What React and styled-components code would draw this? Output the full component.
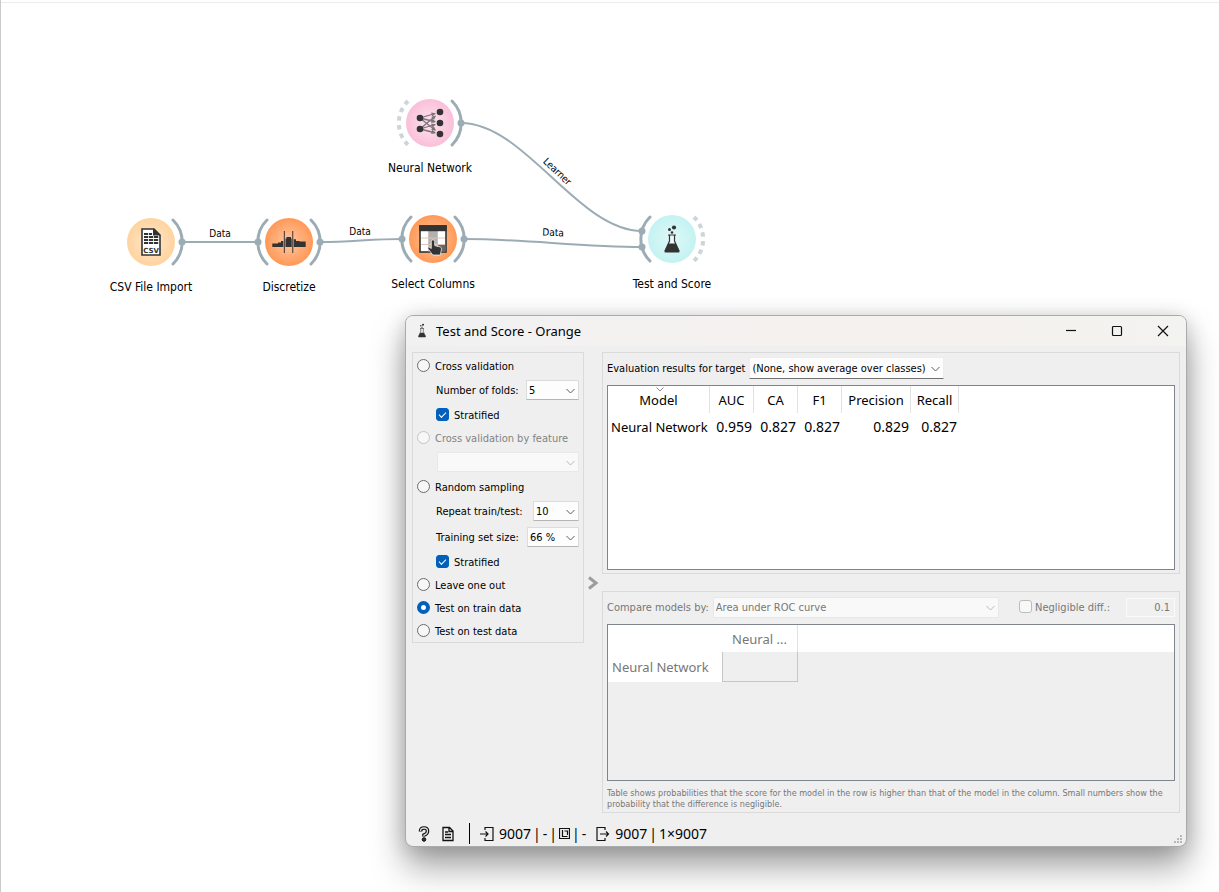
import React from "react";
import styled, { createGlobalStyle, css } from "styled-components";

const ui = `"DejaVu Sans Condensed", "DejaVu Sans", sans-serif`;
const segoe = `"Noto Sans", "Open Sans", sans-serif`;
const ink = "#333333";
const wire = "#9cacb5";

const GlobalStyle = createGlobalStyle`
  *, *::before, *::after { box-sizing: border-box; }
  body { margin: 0; background: #fff; color: #000; font-family: ${ui}; }
`;

/* ---------- canvas ---------- */

const Canvas = styled.main`
  position: relative;
  min-height: 100vh;
  overflow: hidden;
  background: #fff;
  border-left: 1px solid #c9cbcd;

  &::before {
    content: "";
    display: block;
    height: 3px;
    border-bottom: 1px solid #ececec;
  }
`;

const Links = styled.svg`
  position: absolute;
  left: -1px;
  top: 0;
  width: 760px;
  height: 310px;
  fill: none;
  stroke: ${wire};
  stroke-width: 2;

  text {
    fill: #000;
    stroke: none;
    font: 10px ${ui};
    text-anchor: middle;
  }
`;

const Node = styled.figure`
  position: absolute;
  left: ${(p) => p.$x - 1}px;
  top: ${(p) => p.$y}px;
  width: 120px;
  margin: -36px 0 0 -60px;
  display: flex;
  flex-direction: column;
  align-items: center;

  svg { width: 80px; height: 72px; }

  figcaption {
    font-size: 12px;
    line-height: 18px;
    white-space: nowrap;
  }
`;

const ARC_RIGHT = "M22 -22A31 31 0 0 1 22 22";
const ARC_LEFT = "M-22 -22A31 31 0 0 0 -22 22";

function Arc({ d, open }) {
  return (
    <path
      d={d}
      fill="none"
      stroke={open ? "#cdd5da" : wire}
      strokeWidth={open ? 4 : 3}
      strokeLinecap={open ? "butt" : "round"}
      strokeDasharray={open ? "4.5 4.3" : undefined}
    />
  );
}

function Widget({ x, y, name, tone, left, right, children }) {
  const id = "g-" + name.replace(/ /g, "-");
  return (
    <Node $x={x} $y={y}>
      <svg viewBox="-40 -36 80 72" aria-hidden="true">
        <defs>
          <radialGradient id={id}>
            <stop offset="0" stopColor={tone[0]} />
            <stop offset="1" stopColor={tone[1]} />
          </radialGradient>
        </defs>
        {left && <Arc d={ARC_LEFT} open={left === "open"} />}
        {right && <Arc d={ARC_RIGHT} open={right === "open"} />}
        {Array.isArray(left) &&
          left.map((dy) => <circle key={dy} cx={dy ? -30 : -31} cy={dy} r="3.5" fill={wire} />)}
        {Array.isArray(right) &&
          right.map((dy) => <circle key={dy} cx="31" cy={dy} r="3.5" fill={wire} />)}
        <circle r="24" fill={`url(#${id})`} />
        {children}
      </svg>
      <figcaption>{name}</figcaption>
    </Node>
  );
}

function NetworkIcon() {
  const ins = [-5, 6];
  const outs = [-11, 0, 11];
  return (
    <g>
      <g stroke="#7d7478" strokeWidth="1.3">
        {ins.map((a) =>
          outs.map((b) => {
            const k = (b - a) / 20;
            const ex = 6;
            const ey = b - k * 4;
            const n = Math.atan2(b - a, 20);
            const p = (s) =>
              `${ex - 5 * Math.cos(n + s)} ${ey - 5 * Math.sin(n + s)}`;
            return (
              <g key={`${a}${b}`}>
                <line x1="-10" y1={a} x2={ex - 1} y2={ey - k} />
                <path d={`M${ex} ${ey}L${p(0.45)}L${p(-0.45)}Z`} fill="#7d7478" stroke="none" />
              </g>
            );
          })
        )}
      </g>
      <g fill={ink}>
        {ins.map((a) => <circle key={a} cx="-10" cy={a} r="3.3" />)}
        {outs.map((b) => <circle key={b} cx="10" cy={b} r="3.3" />)}
      </g>
    </g>
  );
}

function CsvIcon() {
  return (
    <g>
      <path d="M-9 -13H3L9 -7V13H-9Z" fill="#fff" stroke={ink} strokeWidth="1.6" />
      <path d="M2 -13.5L9.5 -6.5H2Z" fill={ink} />
      <g fill={ink}>
        {[-6, -3, 0].map((y) =>
          [-7, -2, 3].map((x) => <rect key={`${x}${y}`} x={x} y={y} width="4.2" height="2" />)
        )}
        <rect x="-7" y="-9" width="4.2" height="2" />
        <rect x="-2" y="-9" width="3" height="2" />
        <text y="10.5" textAnchor="middle" fontSize="7" fontWeight="bold" fontFamily="DejaVu Sans">
          CSV
        </text>
      </g>
    </g>
  );
}

function DiscretizeIcon() {
  return (
    <g fill={ink}>
      <path d="M-16.7 1.500H-11V0.500H-8V-1H-5.700V5H-16.700Z" />
      <path d="M-3.500 -3.500H-2.500V-5H2V-3.500H2.700V5H-3.500Z" />
      <path d="M4.700 -2.700H7V-1H10.500V-0.500H16.700V5H4.700Z" />
      <path d="M-4.600 -11V11M3.700 -11V11" stroke="#5b4a42" strokeWidth="1.200" />
    </g>
  );
}

function ColumnsIcon() {
  return (
    <g>
      <rect x="-13" y="-13" width="26" height="26" fill="#fff" stroke={ink} strokeWidth="1.600" />
      <rect x="-4.500" y="-8" width="9" height="20" fill="#b3b0af" />
      <rect x="5" y="6" width="7.500" height="6.500" fill="#666" />
      <path d="M-12 -1H12M-12 5.500H12" stroke="#e0c5b9" strokeWidth="1" />
      <path d="M-4.500 -8V12.500M4.500 -8V12.500" stroke="#c5b5ae" strokeWidth="0.700" />
      <rect x="-13.800" y="-13.800" width="27.600" height="6" fill={ink} />
      <path
        d="M-1.700 2.500a1.700 1.700 0 0 1 3.400 0v4l1 .4 4.500 1q1.500.5 1.300 2.200l-1.200 5.900h-7.500l-4.800-6.300q-.6-1.500.8-1.800l2.500 1.600z"
        fill={ink}
        stroke="#fff"
        strokeWidth="0.700"
      />
    </g>
  );
}

function FlaskShape() {
  return (
    <g>
      <path d="M-2.500 -4V2L-7 12H7L2.500 2V-4" fill="#eefafa" />
      <path d="M-4 -4H4M-2.500 -4V2L-7 12M2.500 -4V2L7 12" stroke={ink} strokeWidth="1.200" fill="none" />
      <path d="M-3.500 4.500H3.500L7.500 12Q7.800 13.500 6.500 13.500H-6.500Q-7.800 13.500 -7.500 12Z" fill={ink} />
      <g fill={ink}>
        <circle cx="2" cy="-11.500" r="2.100" />
        <circle cx="-2.500" cy="-9.500" r="1.500" />
        <circle cx="0" cy="-6.500" r="1.300" />
      </g>
    </g>
  );
}

/* ---------- window ---------- */

const Window = styled.section`
  position: absolute;
  left: 404px;
  right: 32px;
  top: 315px;
  min-width: 640px;
  display: flex;
  flex-direction: column;
  background: #efefef;
  border: 1px solid #a9aaaa;
  border-radius: 8px;
  box-shadow: 0 20px 34px rgba(0, 0, 0, 0.36), 0 2px 20px rgba(0, 0, 0, 0.16);
`;

const TitleBar = styled.header`
  display: flex;
  align-items: center;
  height: 30px;
  padding-left: 10px;
  border-radius: 7px 7px 0 0;
  background: linear-gradient(90deg, #f2f1f2, #f5f1ef 60%, #f3f3f0);
  font-family: ${segoe};

  > svg { width: 12px; height: 16px; }

  h1 {
    flex: 1;
    margin: 0 0 0 8px;
    font-size: 13px;
    line-height: 18px;
    font-weight: 400;
  }
`;

const CaptionButton = styled.button`
  width: 46px;
  height: 28px;
  padding: 0;
  border: 0;
  background: none;
  display: grid;
  place-items: center;

  svg { width: 12px; height: 12px; fill: none; stroke: #111; stroke-width: 1.200; }
`;

const Body = styled.div`
  display: grid;
  grid-template-columns: 172px 18px minmax(0, 1fr);
  padding: 6px 6px 0;
`;

const Group = styled.section`
  border: 1px solid #dadada;
  font-size: 11px;
  line-height: 14px;
  color: ${(p) => (p.$muted ? "#777" : "#000")};
`;

const Options = styled(Group)`
  align-self: start;
  padding: 1px 4px 0;
`;

const Row = styled.div`
  display: flex;
  align-items: center;
  height: ${(p) => (p.$tall ? 26 : 23)}px;
  padding-left: ${(p) => (p.$indent ? 19 : 0)}px;
  color: ${(p) => (p.$off ? "#838383" : "inherit")};
`;

const Caption = styled.label`
  padding-top: 2px;
`;

const Choice = styled.label`
  display: flex;
  align-items: flex-start;
  gap: ${(p) => (p.$apart ? 3 : 5)}px;
  margin-left: ${(p) => (p.$apart ? 16 : 0)}px;
  padding-top: ${(p) => (p.$apart ? 0 : 2)}px;
  line-height: 15px;
  white-space: nowrap;
`;

const Radio = styled.input.attrs({ type: "radio", name: "method" })`
  appearance: none;
  width: 13px;
  height: 13px;
  margin: 0;
  border: 1px solid #6c6c6c;
  border-radius: 50%;
  background: #f7f7f7;

  &:checked { border: 4px solid #0060ba; background: #fff; }
  &:disabled { border-color: #c4c4c4; }
`;

const Check = styled.input.attrs({ type: "checkbox" })`
  appearance: none;
  width: 13px;
  height: 13px;
  margin: 0;
  border: 1px solid #bcbcbc;
  border-radius: 3px;
  background: #f8f8f8;
  display: grid;
  place-items: center;

  &:checked { border-color: #0060ba; background: #0060ba; }
  &:checked::after {
    content: "";
    width: 7px;
    height: 4px;
    margin-top: -2px;
    border: solid #fff;
    border-width: 0 0 1px 1px;
    transform: rotate(-45deg);
  }
`;

const Picker = styled.span`
  position: relative;
  display: flex;
  flex: ${(p) => (p.$grow ? 1 : "none")};
  width: ${(p) => (p.$w ? p.$w + "px" : "auto")};
  margin-left: ${(p) => (p.$end ? "auto" : 0)};

  svg {
    position: absolute;
    right: 4px;
    top: 50%;
    width: 9px;
    height: 6px;
    margin-top: -2px;
    fill: none;
    stroke: ${(p) => (p.$off ? "#b9b9b9" : "#5c5c5c")};
    pointer-events: none;
  }
`;

const Select = styled.select`
  appearance: none;
  width: 100%;
  height: ${(p) => p.$h || 20}px;
  padding: 1px 14px 0 2px;
  border: 1px solid #dcdcdc;
  border-bottom-color: #b5b5b5;
  border-radius: 1px;
  background: #fdfdfd;
  font: 11px ${ui};
  color: #000;

  ${(p) => p.$strong && css`border-color: #ececec; border-bottom-color: #6f6f6f;`}
  &:disabled {
    opacity: 1;
    border-color: #e8e8e8;
    background: #f9f9f9;
    color: #777;
  }
`;

function Combo({ id, value, label, h, strong, disabled, ...rest }) {
  return (
    <Picker $off={disabled} {...rest}>
      <Select
        id={id}
        aria-label={label}
        disabled={disabled}
        $h={h}
        $strong={strong}
        defaultValue={value}
      >
        <option>{value}</option>
      </Select>
      <svg viewBox="0 0 9 6" aria-hidden="true"><path d="M.5 1L4.500 5L8.500 1" /></svg>
    </Picker>
  );
}

const Splitter = styled.button`
  padding: 0;
  border: 0;
  background: none;
  display: grid;
  place-items: center;

  svg { width: 12px; height: 14px; fill: none; stroke: #9c9c9c; stroke-width: 3; }
`;

const Results = styled.div`
  display: grid;
  gap: 17px;
`;

const ResultGroup = styled(Group)`
  display: flex;
  flex-direction: column;
  min-height: 222px;
  padding: 4px 4px 2px;
`;

const Bar = styled.div`
  display: flex;
  align-items: center;
  gap: 4px;
  height: 22px;
  margin-bottom: 6px;
  white-space: nowrap;
`;

const Frame = styled.div`
  height: ${(p) => p.$h}px;
  border: 1px solid #7f848f;
  background: ${(p) => (p.$grey ? "#efefef" : "#fff")};
`;

const Table = styled.table`
  border-collapse: separate;
  border-spacing: 0;
  table-layout: fixed;
  width: ${(p) => (p.$full ? "100%" : "351px")};
  font-family: ${segoe};
  font-size: 13px;
  line-height: 18px;

  th, td { padding: 0; font-weight: 400; white-space: nowrap; }
`;

const Head = styled.th`
  width: ${(p) => (p.$w ? p.$w + "px" : "auto")};
  height: 27px;
  text-align: center;
  background: #fff;
  border-right: ${(p) => (p.$last ? 0 : 1)}px solid #e2e2e2;
`;

const SortHead = styled.span`
  position: relative;
  display: block;

  svg {
    position: absolute;
    left: 50%;
    top: -4px;
    width: 8px;
    height: 5px;
    margin-left: -3px;
    fill: none;
    stroke: #8a8a8a;
  }
`;

const RowHead = styled.th`
  height: ${(p) => p.$h}px;
  text-align: left;
  && { padding-left: ${(p) => p.$pad}px; }
  background: #fff;
`;

const Score = styled.td`
  text-align: right;
  font-size: 14px;
  && { padding-right: 2px; }
`;

const Cell = styled.td`
  border: 1px solid #c6c6c6;
  border-width: 0 1px 1px 1px;
`;

const Threshold = styled.input`
  width: 49px;
  height: 19px;
  margin-left: 12px;
  padding: 1px 4px 0;
  border: 1px solid #fafafa;
  background: #f0f0f0;
  color: #777;
  font: 11px ${ui};
  text-align: right;
`;

const Note = styled.p`
  margin: 7px 0 0;
  font-size: 9px;
  line-height: 11px;
`;

const StatusBar = styled.footer`
  position: relative;
  display: flex;
  align-items: center;
  height: 33px;
  padding: 8px 0 0 11px;
  font-family: ${segoe};
  font-size: 14px;
  line-height: 20px;
`;

const Tool = styled.button`
  width: 14px;
  height: 18px;
  margin-right: 10px;
  padding: 0;
  border: 0;
  background: none;

  svg { display: block; width: 14px; height: 18px; }
`;

const Rule = styled.span`
  width: 1px;
  height: 21px;
  margin: 0 10px 0 4px;
  background: #000;
`;

const Flow = styled.span`
  display: flex;
  align-items: center;
  gap: 2px;
  margin-right: 10px;
`;

const FlowIcon = styled.svg`
  width: ${(p) => (p.$mini ? 11 : 14)}px;
  height: ${(p) => (p.$mini ? 11 : 16)}px;
  margin-right: ${(p) => (p.$mini ? 0 : 3)}px;
  fill: none;
  stroke: #111;
  stroke-width: 1.200;
`;

const Grip = styled.svg`
  position: absolute;
  right: 3px;
  bottom: 2px;
  width: 9px;
  height: 9px;
  fill: #b8b8b8;
`;

const scores = [
  ["AUC", 44, "0.959"],
  ["CA", 44, "0.827"],
  ["F1", 44, "0.827"],
  ["Precision", 69, "0.829"],
  ["Recall", 48, "0.827"],
];

export default function App() {
  return (
    <>
      <GlobalStyle />
      <Canvas>
        <Links viewBox="0 0 760 310" aria-hidden="true">
          <path d="M182 242H258" />
          <path d="M320 242C352 242 370 239 402 239" />
          <path d="M464 239C525 239 580 247 642 247" />
          <path d="M461 123C525 123 578 231 642 231" />
          <text x="220" y="237">Data</text>
          <text x="360" y="235">Data</text>
          <text x="553" y="236" transform="rotate(2 553 236)">Data</text>
          <text x="555" y="174" transform="rotate(43 555 174)">Learner</text>
        </Links>

        <Widget x={430} y={123} name="Neural Network" tone={["#fde4ee", "#fabfd9"]} left="open" right={[0]}>
          <NetworkIcon />
        </Widget>
        <Widget x={151} y={242} name="CSV File Import" tone={["#ffe9cd", "#ffd39f"]} right={[0]}>
          <CsvIcon />
        </Widget>
        <Widget x={289} y={242} name="Discretize" tone={["#ffc7a2", "#ff9957"]} left={[0]} right={[0]}>
          <DiscretizeIcon />
        </Widget>
        <Widget x={433} y={239} name="Select Columns" tone={["#ffc7a2", "#ff9957"]} left={[0]} right={[0]}>
          <ColumnsIcon />
        </Widget>
        <Widget x={672} y={239} name="Test and Score" tone={["#e0f8f7", "#c3f3f2"]} left={[-8, 8]} right="open">
          <FlaskShape />
        </Widget>

        <Window>
          <TitleBar>
            <svg viewBox="-12 -15 24 32" aria-hidden="true"><FlaskShape /></svg>
            <h1>Test and Score - Orange</h1>
            <CaptionButton aria-label="Minimize">
              <svg viewBox="0 0 12 12"><path d="M1 5.500H11" /></svg>
            </CaptionButton>
            <CaptionButton aria-label="Maximize">
              <svg viewBox="0 0 12 12"><rect x="1.500" y="1.500" width="9" height="9" rx="1" /></svg>
            </CaptionButton>
            <CaptionButton aria-label="Close">
              <svg viewBox="0 0 12 12"><path d="M1 1L11 11M11 1L1 11" /></svg>
            </CaptionButton>
          </TitleBar>

          <Body>
            <Options>
              <Row><Choice><Radio />Cross validation</Choice></Row>
              <Row $tall $indent>
                <Caption htmlFor="folds">Number of folds:</Caption>
                <Combo id="folds" value="5" $w={53} $end />
              </Row>
              <Row $indent><Choice><Check defaultChecked />Stratified</Choice></Row>
              <Row $off><Choice><Radio disabled />Cross validation by feature</Choice></Row>
              <Row $tall $indent>
                <Combo label="Feature" value="" $w={142} $end disabled />
              </Row>
              <Row><Choice><Radio />Random sampling</Choice></Row>
              <Row $tall $indent>
                <Caption htmlFor="repeat">Repeat train/test:</Caption>
                <Combo id="repeat" value="10" $w={46} $end />
              </Row>
              <Row $tall $indent>
                <Caption htmlFor="size">Training set size:</Caption>
                <Combo id="size" value="66 %" $w={52} $end />
              </Row>
              <Row $indent><Choice><Check defaultChecked />Stratified</Choice></Row>
              <Row><Choice><Radio />Leave one out</Choice></Row>
              <Row><Choice><Radio defaultChecked />Test on train data</Choice></Row>
              <Row><Choice><Radio />Test on test data</Choice></Row>
            </Options>

            <Splitter aria-label="Toggle panel">
              <svg viewBox="0 0 12 14"><path d="M2 1.500L9 7L2 12.500" /></svg>
            </Splitter>

            <Results>
              <ResultGroup>
                <Bar>
                  <Caption htmlFor="target">Evaluation results for target</Caption>
                  <Combo id="target" value="(None, show average over classes)" h={22} strong $w={195} />
                </Bar>
                <Frame $h={185}>
                  <Table>
                    <thead>
                      <tr>
                        <Head $w={102}>
                          <SortHead>
                            Model
                            <svg viewBox="0 0 8 5" aria-hidden="true"><path d="M.5 .5L4 4L7.500 .5" /></svg>
                          </SortHead>
                        </Head>
                        {scores.map(([name, w]) => <Head key={name} $w={w}>{name}</Head>)}
                      </tr>
                    </thead>
                    <tbody>
                      <tr>
                        <RowHead scope="row" $h={28} $pad={3}>Neural Network</RowHead>
                        {scores.map(([name, , v]) => <Score key={name}>{v}</Score>)}
                      </tr>
                    </tbody>
                  </Table>
                </Frame>
              </ResultGroup>

              <ResultGroup $muted>
                <Bar>
                  <Caption htmlFor="compare">Compare models by:</Caption>
                  <Combo id="compare" value="Area under ROC curve" h={21} $grow disabled />
                  <Choice $apart><Check disabled />Negligible diff.:</Choice>
                  <Threshold aria-label="Negligible difference" defaultValue="0.1" disabled />
                </Bar>
                <Frame $h={157} $grey>
                  <Table $full>
                    <thead>
                      <tr>
                        <Head $w={114} $last />
                        <Head $w={76}>Neural ...</Head>
                        <Head $last />
                      </tr>
                    </thead>
                    <tbody>
                      <tr>
                        <RowHead scope="row" $h={30} $pad={4}>Neural Network</RowHead>
                        <Cell />
                      </tr>
                    </tbody>
                  </Table>
                </Frame>
                <Note>
                  Table shows probabilities that the score for the model in the row is higher than that of
                  the model in the column. Small numbers show the probability that the difference is
                  negligible.
                </Note>
              </ResultGroup>
            </Results>
          </Body>

          <StatusBar>
            <Tool aria-label="Help">
              <svg viewBox="0 0 14 18">
                <path d="M3.500 6.500Q3.500 3 7 3T10.500 6T7 10V11.500" fill="none" stroke="#111" strokeWidth="3.600" />
                <path d="M3.500 6Q3.500 3 7 3T10.500 6T7 10V11" fill="none" stroke="#ddd" strokeWidth="1.300" />
                <circle cx="7" cy="14.500" r="1.800" fill="#333" stroke="#111" />
              </svg>
            </Tool>
            <Tool aria-label="Report">
              <svg viewBox="0 0 14 18" fill="none" stroke="#111" strokeWidth="1.300">
                <path d="M2 2.500H8.500L12 6V15.500H2ZM8 2.500V6.500H12M4 7H7M4 9.500H10M4 12.500H10" />
              </svg>
            </Tool>
            <Rule />
            <Flow>
              <FlowIcon viewBox="0 0 14 16"><path d="M5 4V1.500H13V14.500H5V12M0 8H8M5.500 5.500L8 8L5.500 10.500" /></FlowIcon>
              <span>9007</span>
              <span>|</span>
              <span>-</span>
              <span>|</span>
              <FlowIcon $mini viewBox="0 0 11 11"><path d="M.5 .5H10.500V10.500H.5ZM3.500 2V8.500H8.500M5.500 3H8.500V7" /></FlowIcon>
              <span>|</span>
              <span>-</span>
            </Flow>
            <Flow>
              <FlowIcon viewBox="0 0 14 16"><path d="M9 4V1.500H1V14.500H9V12M4 8H12.500M10 5.500L12.500 8L10 10.500" /></FlowIcon>
              <span>9007</span>
              <span>|</span>
              <span>1×9007</span>
            </Flow>
            <Grip viewBox="0 0 9 9" aria-hidden="true">
              <path d="M6 0h2v2h-2zM3 3h2v2h-2zM6 3h2v2h-2zM0 6h2v2h-2zM3 6h2v2h-2zM6 6h2v2h-2z" />
            </Grip>
          </StatusBar>
        </Window>
      </Canvas>
    </>
  );
}
